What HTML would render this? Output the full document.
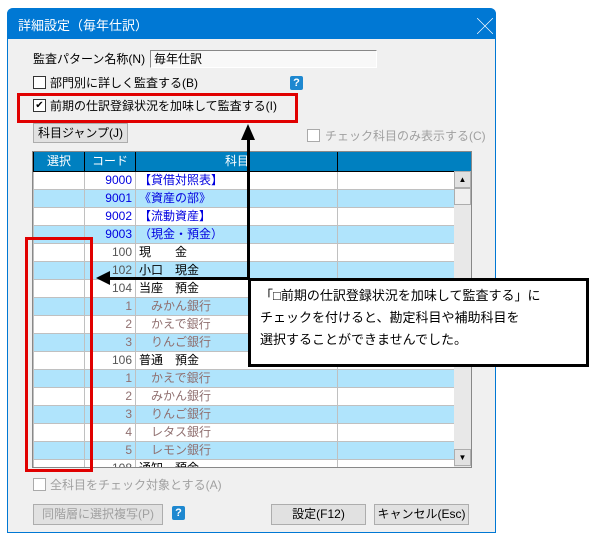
<!DOCTYPE html><html><head><meta charset="utf-8"><style>
body{margin:0;width:600px;height:543px;background:#fff;position:relative;overflow:hidden;font-family:"Liberation Sans","Noto Sans CJK JP",sans-serif;font-size:12px;color:#000}
.a{position:absolute}
.win{left:7px;top:8px;width:487px;height:524px;background:#f0f0f0;border:1px solid #0078d4;border-top:none;border-radius:6px 6px 0 0}
.title{left:7px;top:8px;width:489px;height:31px;background:#0078d4;color:#fff;font-size:13px;border-radius:6px 6px 0 0}
.cb{width:11px;height:11px;border:1px solid #333;background:#fff}
.btn{background:#e1e1e1;border:1px solid #adadad;text-align:center;line-height:18px;box-sizing:border-box}
table{border-collapse:collapse;table-layout:fixed}
tr{height:18px}
td{border:1px solid #c0c0c0;padding:0 3px;font-size:12px;white-space:nowrap;overflow:hidden;line-height:16px}
tr.b td{background:#b0e4fc}
th{background:#0080c0;color:#fff;font-weight:normal;border:1px solid #000;border-top:none;font-size:12px;padding:0;line-height:17px}
.r{text-align:right}
.bl{color:#0000e0}.br{color:#907070}
.q{width:13px;height:14px;background:#1e88d0;color:#fff;font-weight:bold;text-align:center;line-height:14px;border-radius:2px;font-size:11px}
</style></head><body>
<div class="a win"></div>
<div class="a title"><span class="a" style="left:11px;top:7px">詳細設定（毎年仕訳）</span><span class="a" style="left:470px;top:5px;font-size:16px;font-weight:100">╳</span></div>
<div class="a" style="left:33px;top:50px">監査パターン名称(N)</div>
<div class="a" style="left:150px;top:50px;background:#f8f8f8;border:1px solid #888;border-right-color:#fff;border-bottom-color:#fff;line-height:16px;padding-left:3px;box-sizing:border-box;width:227px;height:18px">毎年仕訳</div>
<div class="a cb" style="left:33px;top:76px"></div><div class="a" style="left:50px;top:74px">部門別に詳しく監査する(B)</div>
<div class="a q" style="left:290px;top:76px">?</div>
<div class="a cb" style="left:33px;top:99px;font-size:10px;line-height:11px;text-align:center">✔</div><div class="a" style="left:50px;top:97px">前期の仕訳登録状況を加味して監査する(I)</div>
<div class="a" style="left:17px;top:93px;width:275px;height:24px;border:3px solid #e00000"></div>
<div class="a btn" style="left:33px;top:123px;width:95px;height:20px">科目ジャンプ(J)</div>
<div class="a cb" style="left:307px;top:129px;border-color:#aaa"></div><div class="a" style="left:325px;top:127px;color:#a0a0a0">チェック科目のみ表示する(C)</div>
<div class="a" style="left:32px;top:151px;width:438px;height:315px;border:1px solid #888;overflow:hidden;background:#fff">
<table style="width:421px"><colgroup><col style="width:51px"><col style="width:51px"><col style="width:202px"><col style="width:117px"></colgroup>
<tr style="height:19px"><th>選択</th><th>コード</th><th style="text-align:right;padding-right:88px">科目</th><th></th></tr>
<tr><td></td><td class="r bl">9000</td><td class="bl">【貸借対照表】</td><td></td></tr>
<tr class="b"><td></td><td class="r bl">9001</td><td class="bl">《資産の部》</td><td></td></tr>
<tr><td></td><td class="r bl">9002</td><td class="bl">【流動資産】</td><td></td></tr>
<tr class="b"><td></td><td class="r bl">9003</td><td class="bl">（現金・預金）</td><td></td></tr>
<tr><td></td><td class="r" style="color:#555">100</td><td>現　　金</td><td></td></tr>
<tr class="b"><td></td><td class="r" style="color:#555">102</td><td>小口　現金</td><td></td></tr>
<tr><td></td><td class="r" style="color:#555">104</td><td>当座　預金</td><td></td></tr>
<tr class="b"><td></td><td class="r br">1</td><td class="br">　みかん銀行</td><td></td></tr>
<tr><td></td><td class="r br">2</td><td class="br">　かえで銀行</td><td></td></tr>
<tr class="b"><td></td><td class="r br">3</td><td class="br">　りんご銀行</td><td></td></tr>
<tr><td></td><td class="r" style="color:#555">106</td><td>普通　預金</td><td></td></tr>
<tr class="b"><td></td><td class="r br">1</td><td class="br">　かえで銀行</td><td></td></tr>
<tr><td></td><td class="r br">2</td><td class="br">　みかん銀行</td><td></td></tr>
<tr class="b"><td></td><td class="r br">3</td><td class="br">　りんご銀行</td><td></td></tr>
<tr><td></td><td class="r br">4</td><td class="br">　レタス銀行</td><td></td></tr>
<tr class="b"><td></td><td class="r br">5</td><td class="br">　レモン銀行</td><td></td></tr>
<tr><td></td><td class="r" style="color:#555">108</td><td>通知　預金</td><td></td></tr>
</table>
<div class="a" style="left:421px;top:0;width:17px;height:19px;background:#0080c0"></div>
<div class="a" style="left:421px;top:19px;width:17px;height:296px;background:#e8e8e8"></div>
<div class="a btn" style="left:421px;top:19px;width:17px;height:17px;font-size:8px;line-height:16px">▲</div>
<div class="a btn" style="left:421px;top:36px;width:17px;height:17px;background:#f0f0f0"></div>
<div class="a btn" style="left:421px;top:297px;width:17px;height:17px;font-size:8px;line-height:16px">▼</div>
</div>
<div class="a" style="left:25px;top:237px;width:62px;height:229px;border:3px solid #e00000"></div>
<div class="a cb" style="left:33px;top:478px;border-color:#aaa"></div><div class="a" style="left:50px;top:476px;color:#a0a0a0">全科目をチェック対象とする(A)</div>
<div class="a btn" style="left:33px;top:504px;width:130px;height:21px;color:#a0a0a0;line-height:19px">同階層に選択複写(P)</div>
<div class="a q" style="left:172px;top:506px">?</div>
<div class="a btn" style="left:271px;top:504px;width:95px;height:21px;line-height:19px">設定(F12)</div>
<div class="a btn" style="left:374px;top:504px;width:95px;height:21px;line-height:19px">キャンセル(Esc)</div>
<div class="a" style="left:247px;top:138px;width:3px;height:142px;background:#000"></div>
<div class="a" style="left:241px;top:124px;width:0;height:0;border-left:7px solid transparent;border-right:7px solid transparent;border-bottom:16px solid #000"></div>
<div class="a" style="left:108px;top:277px;width:142px;height:3px;background:#000"></div>
<div class="a" style="left:96px;top:271px;width:0;height:0;border-top:7px solid transparent;border-bottom:7px solid transparent;border-right:14px solid #000"></div>
<div class="a" style="left:248px;top:278px;border:3px solid #000;background:#fff;font-size:13px;line-height:22px;padding:4px 0 0 9px;width:326px;height:79px">「□前期の仕訳登録状況を加味して監査する」に<br>チェックを付けると、勘定科目や補助科目を<br>選択することができませんでした。</div>
</body></html>
